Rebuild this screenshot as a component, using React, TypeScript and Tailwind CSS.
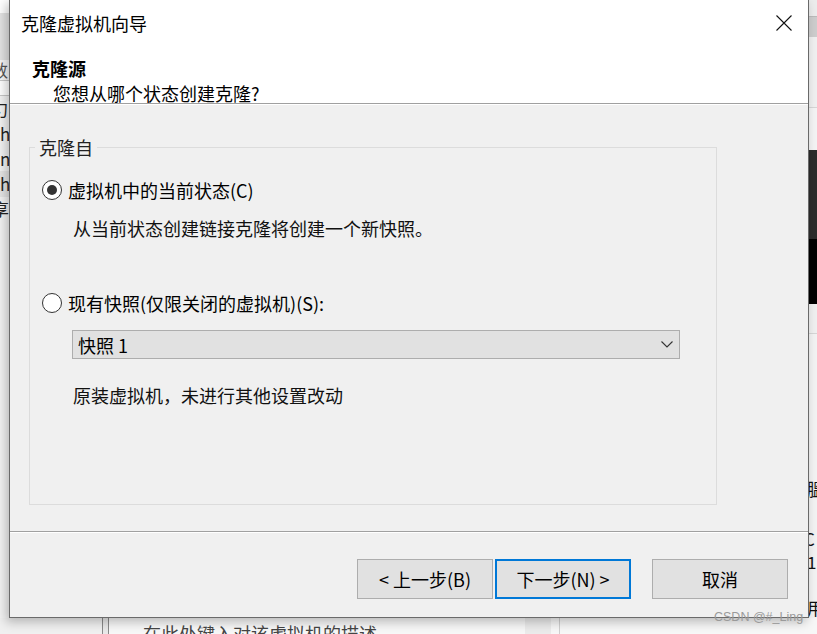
import React from 'react';

const font = "font-['Noto_Sans_CJK_SC','Noto_Sans',sans-serif]";

function Radio({ checked }: { checked?: boolean }) {
    return (
        <span className="flex h-[20px] w-[20px] shrink-0 items-center justify-center rounded-full border border-[#333] bg-white">
            {checked && <span className="h-[10px] w-[10px] rounded-full bg-[#333]" />}
        </span>
    );
}

function Button({ children, primary }: { children: React.ReactNode; primary?: boolean }) {
    return (
        <button
            className={`flex h-[40px] w-[136px] items-center justify-center bg-[#e1e1e1] text-[18px] text-black ${primary ? 'border-2 border-[#0078d7]' : 'border border-[#adadad]'
                }`}
        >
            {children}
        </button>
    );
}

// things of the desktop that peek out behind the dialog
function Backdrop() {
    return (
        <>
            {/* left strip */}
            <div className="absolute left-0 top-0 flex h-[618px] w-[9px] flex-col overflow-hidden bg-[#f3f3f3] text-[17px] leading-[26px] text-[#222]">
                <div className="h-[13px] bg-white" />
                <div className="h-[47px] bg-[#e3e3e3]" />
                <div className="flex h-[21px] items-center border-b border-[#c8c8c8] bg-[#f7f7f7] text-[#555]">
                    <span className="-ml-[9px]">数</span>
                </div>
                <div className="h-[15px] border-b border-[#c8c8c8] bg-white" />
                <span className="-ml-[9px]">勺</span>
                <span className="-mt-px">h</span>
                <span className="-mt-px">n</span>
                <span className="-mt-px bg-[#e5e5e5]">h</span>
                <span className="-ml-[8px] -mt-px">享</span>
            </div>

            {/* right strip */}
            <div className="absolute right-0 top-0 flex h-[618px] w-[9px] flex-col overflow-hidden bg-[#f3f3f3] text-[17px] leading-[20px] text-[#111]">
                <div className="h-[17px] border-b border-[#bbb] bg-[#ececec]" />
                <div className="h-[20px] bg-[#cdcdcd]" />
                <div className="h-[72px] border-b border-[#d6d6d6] bg-[#f0f0f0]" />
                <div className="h-[42px] bg-[#f4f4f4]" />
                <div className="h-[90px] bg-[#2c2c2c]" />
                <div className="h-[65px] bg-black" />
                <div className="h-[30px] border-b border-[#d6d6d6] bg-[#f0f0f0]" />
                <div className="h-[147px]" />
                <span className="-ml-[1px]">膃</span>
                <div className="h-[30px]" />
                <span className="-ml-[4px]">C</span>
                <span className="-ml-[1px] mt-[3px]">1</span>
                <div className="h-[26px]" />
                <span className="-ml-[1px]">用</span>
            </div>

            {/* bottom strip */}
            <div className="absolute bottom-0 left-0 flex h-[16px] w-full bg-[#f0f0f0]">
                <div className="w-[102px]" />
                <div className="w-[7px] border-x border-[#8a8a8a] bg-[#e9e9e9]" />
                <div className="relative flex-1 overflow-hidden bg-[#f7f7f7]">
                    <span className="absolute left-[34px] top-[3px] text-[18px] leading-[24px] text-[#444]">
                        在此处键入对该虚拟机的描述
                    </span>
                    <div className="absolute left-[416px] top-0 h-full w-[26px] bg-[#ebebeb]" />
                    <div className="absolute left-[450px] top-0 h-full w-px bg-[#cfcfcf]" />
                </div>
            </div>
        </>
    );
}

export default function App() {
    return (
        <div className={`relative h-[634px] w-[817px] overflow-hidden bg-[#f3f3f3] ${font}`}>
            <Backdrop />

            {/* dialog window */}
            <div className="absolute left-[9px] top-[-1px] flex h-[619px] w-[800px] flex-col border border-[#6a6a6a] bg-[#f0f0f0] shadow-[-3px_4px_10px_rgba(0,0,0,0.25)]">
                {/* header */}
                <div className="flex h-[104px] flex-col border-b border-[#a0a0a0] bg-white text-black">
                    <div className="flex h-[45px] items-center justify-between pl-[11px] pr-[16px] pt-px">
                        <span className="text-[18px]">克隆虚拟机向导</span>
                        <svg width="16" height="16" viewBox="0 0 16 16">
                            <path d="M0.5 0.5 L15.5 15.5 M15.5 0.5 L0.5 15.5" stroke="#111" strokeWidth="1.1" />
                        </svg>
                    </div>
                    <div className="mt-[13px] pl-[22px] text-[18px] font-bold leading-[20px]">克隆源</div>
                    <div className="mt-[5px] pl-[43px] text-[18px] leading-[20px]">您想从哪个状态创建克隆?</div>
                </div>

                {/* body */}
                <div className="flex-1 border-t border-white">
                    <div className="relative ml-[19px] mt-[42px] h-[358px] w-[688px] border border-[#dcdcdc]">
                        <span className="absolute left-[5px] top-[-13px] bg-[#f0f0f0] px-[4px] text-[18px] leading-[24px] text-[#222]">
                            克隆自
                        </span>
                        <div className="flex flex-col pl-[12px] pt-[30px] text-[18px] leading-[24px] text-black">
                            <label className="flex items-center gap-[6px]">
                                <Radio checked />
                                <span>虚拟机中的当前状态(C)</span>
                            </label>
                            <p className="ml-[31px] mt-[14px] text-[#111]">从当前状态创建链接克隆将创建一个新快照。</p>
                            <label className="mt-[51px] flex items-center gap-[6px]">
                                <Radio />
                                <span>现有快照(仅限关闭的虚拟机)(S):</span>
                            </label>
                            <div className="ml-[30px] mt-[15px] flex h-[29px] w-[608px] items-center justify-between border border-[#adadad] bg-[#e1e1e1] pl-[5px] pr-[6px]">
                                <span>快照 1</span>
                                <svg width="12" height="7" viewBox="0 0 12 7">
                                    <path d="M0.5 0.5 L6 6 L11.5 0.5" fill="none" stroke="#333" strokeWidth="1.1" />
                                </svg>
                            </div>
                            <p className="ml-[31px] mt-[24px] text-[#111]">原装虚拟机，未进行其他设置改动</p>
                        </div>
                    </div>
                </div>

                {/* footer */}
                <div className="h-[86px] border-t border-[#a0a0a0]">
                    <div className="flex h-full justify-end border-t border-white pr-[20px] pt-[26px]">
                        <Button>&lt; 上一步(B)</Button>
                        <div className="w-[2px]" />
                        <Button primary>下一步(N) &gt;</Button>
                        <div className="w-[21px]" />
                        <Button>取消</Button>
                    </div>
                </div>
            </div>

            {/* watermark */}
            <span className="absolute left-[714px] top-[609px] text-[12.5px] leading-[16px] text-[#9a9a9a] [font-family:'Liberation_Sans',sans-serif]">
                CSDN @#_Ling
            </span>
        </div>
    );
}
